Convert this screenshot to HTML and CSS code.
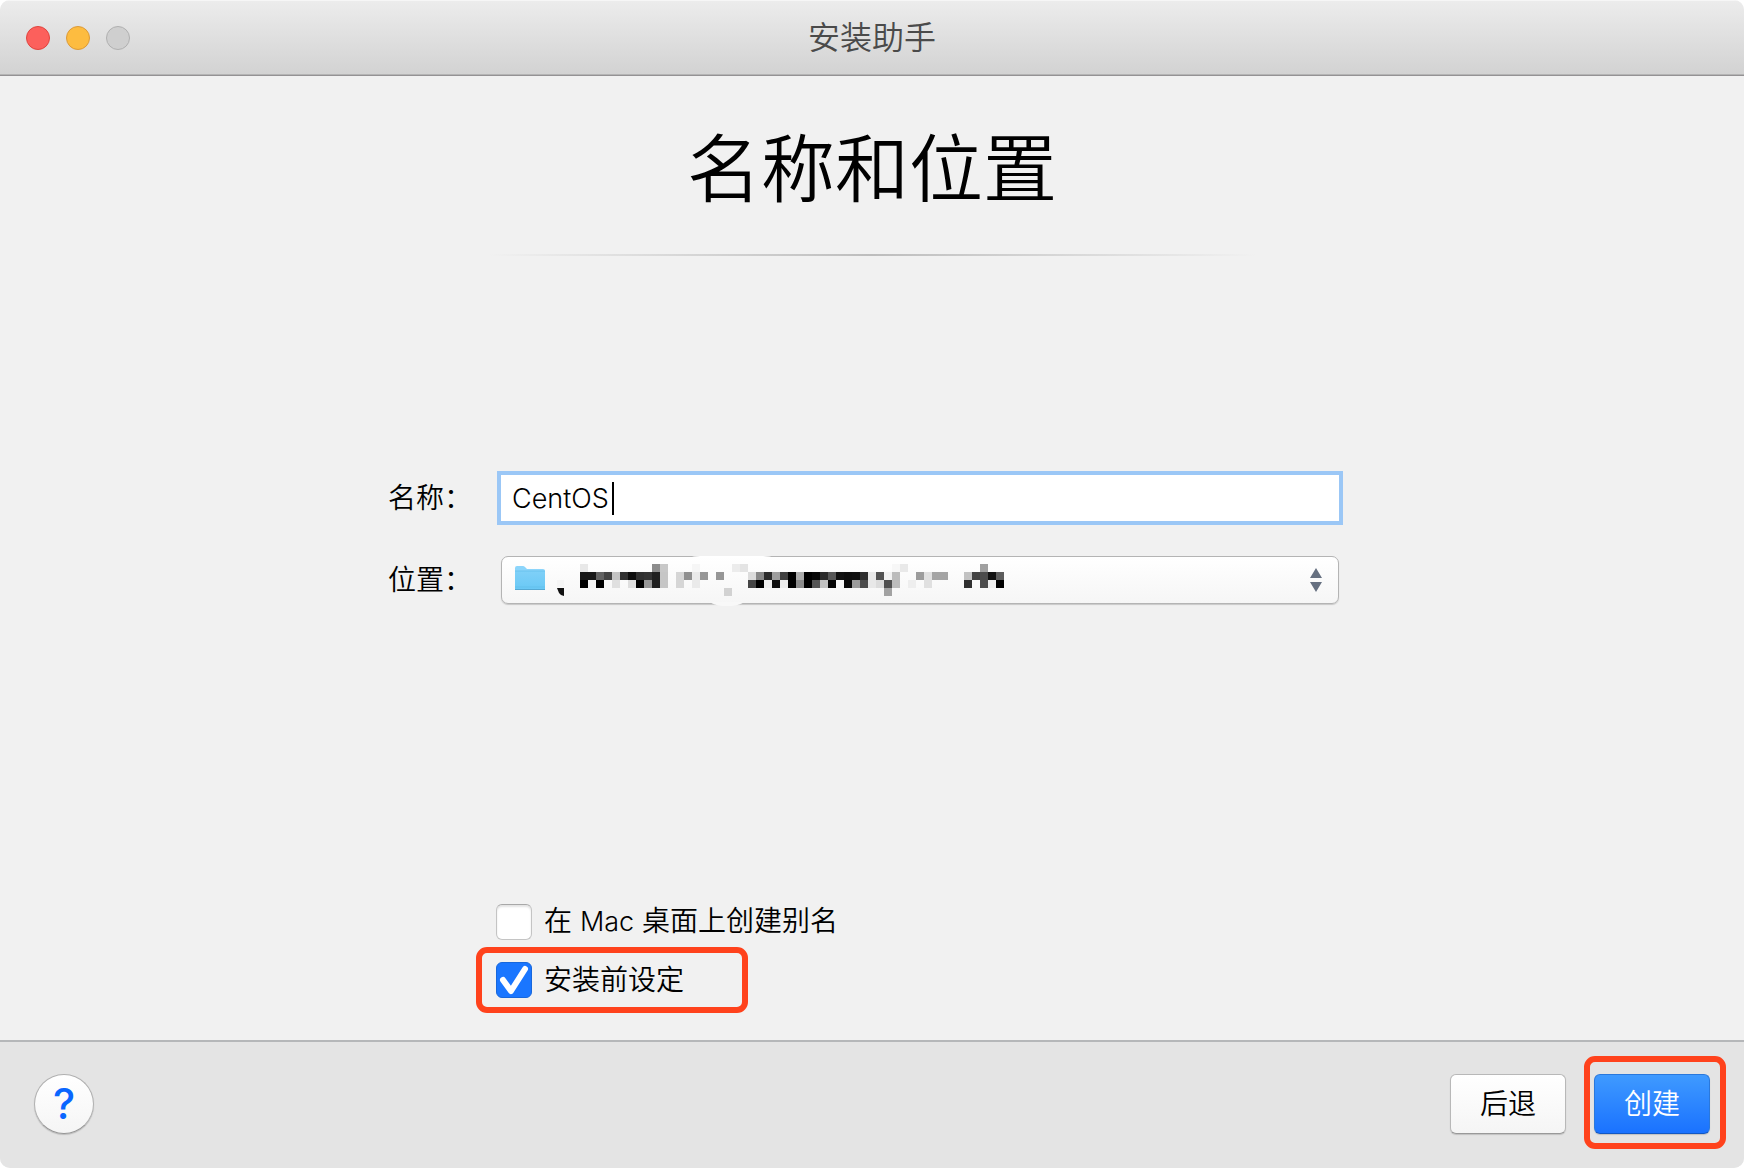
FILE: index.html
```
<!DOCTYPE html>
<html lang="zh-CN">
<head>
    <meta charset="UTF-8">
    <meta name="viewport" content="width=device-width, initial-scale=1.0">
    <title>安装助手</title>
    <link rel="stylesheet" href="styles.css">
</head>
<body>
    <div class="window">
        <header class="titlebar">
            <div class="lights">
                <button type="button" class="light red" aria-label="关闭"></button>
                <button type="button" class="light yellow" aria-label="最小化"></button>
                <button type="button" class="light gray" aria-label="缩放" disabled></button>
            </div>
            <div class="window-title">安装助手</div>
        </header>

        <main class="content">
            <h1>名称和位置</h1>
            <div class="divider"></div>

            <form class="fields" id="vmForm">
                <label for="vmName">名称：</label>
                <div class="field">
                    <input type="text" id="vmName" value="CentOS">
                    <span class="caret"></span>
                </div>

                <label for="vmLocation">位置：</label>
                <div class="field">
                    <select id="vmLocation">
                        <option></option>
                    </select>
                    <svg class="folder" width="32" height="28" viewBox="0 0 32 28" aria-hidden="true">
                        <defs>
                            <linearGradient id="folderFill" x1="0" y1="0" x2="0" y2="1">
                                <stop offset="0" stop-color="#7fd0f8"/>
                                <stop offset="1" stop-color="#69c8f5"/>
                            </linearGradient>
                        </defs>
                        <path d="M1 25V3Q1 1 3 1H9Q10 1 11 2L13 4H29Q31 4 31 6V25Z" fill="#8cd5fb"/>
                        <path d="M1 6H31V24Q31 25 30 25H2Q1 25 1 24Z" fill="url(#folderFill)"/>
                        <path d="M1 6H31M1 22H31" stroke="#5fbde9" stroke-width=".7"/>
                        <path d="M1 24.500H31" stroke="#55a8d2"/>
                    </svg>
                    <!-- pixelated path -->
                    <svg class="mosaic" id="mosaic" width="450" height="50" viewBox="0 0 450 50" aria-hidden="true">
                        <path d="M131 2Q137 0 143 0H206Q212 0 219 2Z" fill="#fff"/>
                        <path d="M153 46H187Q183 49 175 50H165Q157 49 153 46Z" fill="#f8f8f8"/>
                        <path d="M0 32H7V40Q4 40 2 37Z" fill="#111"/>
                        <path d="M0 24H7V31H0Z" fill="#f5f5f5"/>
                    </svg>
                    <svg class="arrows" width="12" height="24" viewBox="0 0 12 24" aria-hidden="true">
                        <path d="M6 0L12 10H0ZM0 14H12L6 24Z" fill="#667080"/>
                    </svg>
                </div>
            </form>

            <div class="options">
                <label class="option">
                    <input type="checkbox" form="vmForm">
                    <span>在 <span class="latin">Mac</span> 桌面上创建别名</span>
                </label>
                <label class="option marked">
                    <input type="checkbox" form="vmForm" checked>
                    <svg class="tick" width="36" height="36" viewBox="0 0 36 36" aria-hidden="true">
                        <path d="M7 18L15 29L29 7" fill="none" stroke="#fff" stroke-width="6" stroke-linecap="round" stroke-linejoin="round"/>
                    </svg>
                    <span>安装前设定</span>
                </label>
            </div>
        </main>

        <footer class="bottombar">
            <button type="button" class="help" aria-label="帮助">?</button>
            <button type="button" class="btn back">后退</button>
            <div class="mark">
                <button type="submit" form="vmForm" class="btn create">创建</button>
            </div>
        </footer>
    </div>

    <script>
        // each row: [column, gray level], cells are 8px
        const rows = [
            [[0,232],[9,140],[10,200],[14,246],[19,236],[20,228],[39,247],[40,233],[50,160]],
            [[0,24],[1,24],[2,98],[3,68],[4,196],[5,50],[6,14],[7,48],[8,52],[9,32],[10,198],
             [12,214],[13,144],[14,234],[15,150],[17,150],[21,220],[22,136],[23,44],[24,158],[25,64],
             [26,0],[27,172],[28,0],[29,8],[30,44],[31,88],[32,18],[33,14],[34,16],[35,46],[36,232],
             [37,82],[38,242],[39,188],[42,156],[43,224],[44,164],[45,164],[48,194],[49,66],[50,76],[51,18],[52,92]],
            [[0,0],[1,244],[2,0],[4,224],[6,222],[7,0],[8,150],[9,32],[10,198],[12,214],[14,234],
             [21,70],[22,0],[23,240],[24,16],[25,236],[26,0],[27,140],[28,0],[29,86],[30,194],[31,4],
             [32,246],[33,8],[34,156],[35,76],[36,232],[37,220],[38,80],[39,188],[41,238],[43,224],
             [48,48],[50,76],[51,238],[52,0]],
            [[18,210],[38,162]]
        ];
        const mosaic = document.getElementById('mosaic');
        rows.forEach((cells, row) => {
            cells.forEach(([col, gray]) => {
                const rect = document.createElementNS('http://www.w3.org/2000/svg', 'rect');
                rect.setAttribute('x', 23 + col * 8);
                rect.setAttribute('y', 8 + row * 8);
                rect.setAttribute('width', 8);
                rect.setAttribute('height', 8);
                rect.setAttribute('fill', `rgb(${gray}, ${gray}, ${gray})`);
                mosaic.appendChild(rect);
            });
        });
    </script>
</body>
</html>
```
FILE: styles.css
```
* {
    box-sizing: border-box;
}

body {
    margin: 0;
    background: #fff;
    color: #000;
    font-family: Inter, "Noto Sans CJK SC", sans-serif;
    font-size: 28px;
    font-weight: 350;
    line-height: 36px;
}

button, input, select {
    font: inherit;
    color: inherit;
    margin: 0;
}

.window {
    min-height: 100vh;
    display: flex;
    flex-direction: column;
    background: #f1f1f1;
    border-radius: 10px;
    overflow: hidden;
}

/* title bar */
.titlebar {
    display: grid;
    grid-template-columns: 1fr auto 1fr;
    align-items: center;
    height: 76px;
    padding: 0 26px;
    background: linear-gradient(#ececec, #d2d2d2);
    border-top: 1px solid #f6f6f6;
    border-bottom: 1px solid #949294;
    box-shadow: inset 0 -1px #b4b4b4;
}

.lights {
    display: flex;
    gap: 16px;
}

.light {
    width: 24px;
    height: 24px;
    padding: 0;
    border: 1px solid #e0443e;
    border-radius: 50%;
    background: #fc605c;
}

.yellow {
    background: #fdbc40;
    border-color: #dc9a38;
}

.gray {
    background: #cfcfcf;
    border-color: #b0b0b0;
}

.window-title {
    font-size: 32px;
    color: #4a4a4a;
}

/* content */
.content {
    flex: 1;
    display: flex;
    flex-direction: column;
}

h1 {
    margin: 43px 0 0;
    font-size: 74px;
    font-weight: 350;
    line-height: 100px;
    text-align: center;
}

.divider {
    width: 44%;
    height: 2px;
    margin: 35px auto 0;
    background: linear-gradient(to right, transparent, #bdbdbd, transparent);
}

.fields {
    display: grid;
    grid-template-columns: 113px 1fr;
    row-gap: 34px;
    align-items: center;
    margin: 218px 405px 0 388px;
}

.field {
    position: relative;
    height: 48px;
}

#vmName {
    display: block;
    width: 100%;
    height: 46px;
    margin: 1px 0;
    padding: 0 11px;
    border: 0;
    outline: 4px solid #9bc7f6;
    box-shadow: 0 0 0 1px #8aaed8;
    background: #fff;
    font-size: 27px;
}

.caret {
    position: absolute;
    left: 111px;
    top: 8px;
    width: 2px;
    height: 33px;
    background: #000;
}

#vmLocation {
    appearance: none;
    width: 100%;
    height: 48px;
    padding: 0 48px;
    border: 1px solid #b4b4b4;
    border-radius: 7px;
    background: linear-gradient(#fff, #f6f6f6);
    box-shadow: 0 1px 1px #c8c8c8;
}

.folder, .mosaic, .arrows {
    position: absolute;
    pointer-events: none;
}

.folder {
    left: 13px;
    top: 9px;
}

.mosaic {
    left: 56px;
    top: 0;
}

.arrows {
    right: 17px;
    top: 12px;
}

.options {
    display: flex;
    flex-direction: column;
    align-items: flex-start;
    margin: auto 0 27px 476px;
}

.option {
    position: relative;
    display: flex;
    align-items: center;
    gap: 12px;
    padding: 9px 14px;
    border: 6px solid transparent;
}

.option input {
    appearance: none;
    width: 36px;
    height: 36px;
    border: 1px solid #c4c4c4;
    border-top-color: #a8a8a8;
    border-radius: 6px;
    background: #fff;
    box-shadow: inset 0 2px 2px #e4e4e4;
}

.option input:checked {
    background: #1a76ff;
    border-color: #1767dc;
    box-shadow: none;
}

.tick {
    position: absolute;
    left: 14px;
    top: 9px;
    pointer-events: none;
}

.latin {
    font-size: 27px;
}

.marked {
    width: 272px;
    margin-top: -8px;
}

.marked, .mark {
    border: 6px solid #ff421c;
    border-radius: 11px;
}

/* bottom bar */
.bottombar {
    display: flex;
    align-items: flex-start;
    padding: 14px 18px 19px 34px;
    background: #e4e4e4;
    border-top: 2px solid #b5b7b9;
}

.help {
    width: 60px;
    height: 60px;
    margin: 18px auto 0 0;
    padding: 0;
    border: 1px solid #b0b0b0;
    border-bottom-color: #969696;
    border-radius: 50%;
    background: linear-gradient(#fff, #f5f5f5);
    box-shadow: 0 1px 1px #bbb;
    color: #0a66ff;
    font-size: 42px;
    font-weight: 500;
}

.btn {
    width: 116px;
    height: 60px;
    padding: 0;
    border: 1px solid #b8b8b8;
    border-bottom-color: #999;
    border-radius: 6px;
    background: linear-gradient(#fff, #f5f5f5);
    box-shadow: 0 1px 1px #c0c0c0;
}

.back {
    margin: 18px 18px 0 0;
}

.mark {
    padding: 12px 10px 9px 4px;
}

.create {
    display: block;
    border-color: #2a78dc;
    border-bottom-color: #1258c4;
    background: linear-gradient(#3f9aff, #1a72ff);
    color: #fff;
}
```
